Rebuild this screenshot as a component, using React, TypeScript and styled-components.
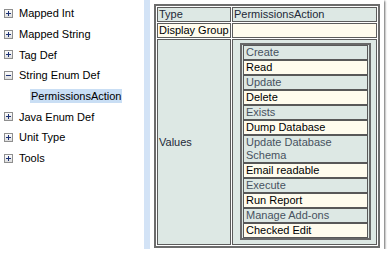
import React from "react";
import styled, { createGlobalStyle } from "styled-components";

const Global = createGlobalStyle`
  html, body { margin: 0; padding: 0; background: #ffffff; }
  body { font-family: "Liberation Sans", Arial, sans-serif; }
`;

const Frame = styled.div`
  display: flex;
  width: 384px;
  height: 249px;
  background: #ffffff;
  box-shadow: 1px 1px 2px rgba(0, 0, 0, 0.6);
  overflow: hidden;
`;

const Tree = styled.ul`
  list-style: none;
  margin: 0;
  padding: 3px 0 0 0;
  width: 144px;
  flex: none;
`;

const TreeRow = styled.li<{ $indent?: boolean }>`
  display: flex;
  align-items: center;
  height: 20.7px;
  padding-left: ${(p) => (p.$indent ? "30px" : "4px")};
  gap: 5px;
  font-size: 11px;
  color: #000000;
  white-space: nowrap;
`;

const Label = styled.span<{ $selected?: boolean }>`
  padding: 1px 1px;
  line-height: 12px;
  background: ${(p) => (p.$selected ? "#c9def4" : "transparent")};
`;

const Splitter = styled.div`
  width: 6px;
  flex: none;
  background: #d3e3f6;
`;

const Content = styled.div`
  flex: 1;
  padding: 4px 4px 0 4px;
`;

const OuterTable = styled.table`
  width: 226px;
  border-collapse: separate;
  border-spacing: 1px;
  border: 2px solid #6c6c6c;
  font-size: 11px;
  line-height: 13px;
`;

const Cell = styled.td<{ $cream?: boolean; $pad?: string }>`
  border: 1px solid #5c5c5c;
  padding: ${(p) => p.$pad ?? "0 1px"};
  background: ${(p) => (p.$cream ? "#fffcee" : "#dde8e4")};
  color: ${(p) => (p.$cream ? "#000000" : "#232838")};
  vertical-align: middle;
  white-space: nowrap;
`;

const KeyCell = styled(Cell)`
  width: 71px;
`;

const InnerTable = styled.table`
  margin: 3px 5px 4px 7px;
  width: 131px;
  border-collapse: separate;
  border-spacing: 1px 0;
  border: 2px solid #686868;
  padding: 0;
`;

const Item = styled.td<{ $cream?: boolean }>`
  border: 1px solid #585858;
  padding: 0 2px;
  line-height: 13px;
  background: ${(p) => (p.$cream ? "#fffcee" : "#dde8e4")};
  color: ${(p) => (p.$cream ? "#000000" : "#47525f")};
`;

function Icon({ open }: { open?: boolean }) {
  return (
    <svg width="9" height="9" viewBox="0 0 9 9" style={{ flex: "none" }}>
      <defs>
        <linearGradient id={open ? "gm" : "gp"} x1="0" y1="0" x2="0" y2="1">
          <stop offset="0" stopColor="#ffffff" />
          <stop offset="1" stopColor="#dcdcdc" />
        </linearGradient>
      </defs>
      <rect x="0.5" y="0.5" width="8" height="8" fill={`url(#${open ? "gm" : "gp"})`} stroke="#8e8e8e" />
      <rect x="2" y="4" width="5" height="1" fill="#1d3275" />
      {!open && <rect x="4" y="2" width="1" height="5" fill="#1d3275" />}
    </svg>
  );
}

const tree: { label: string; open?: boolean; leaf?: boolean; selected?: boolean }[] = [
  { label: "Mapped Int" },
  { label: "Mapped String" },
  { label: "Tag Def" },
  { label: "String Enum Def", open: true },
  { label: "PermissionsAction", leaf: true, selected: true },
  { label: "Java Enum Def" },
  { label: "Unit Type" },
  { label: "Tools" },
];

const values = [
  "Create",
  "Read",
  "Update",
  "Delete",
  "Exists",
  "Dump Database",
  "Update Database Schema",
  "Email readable",
  "Execute",
  "Run Report",
  "Manage Add-ons",
  "Checked Edit",
];

export default function App() {
  return (
    <>
      <Global />
      <Frame>
        <Tree>
          {tree.map((t) => (
            <TreeRow key={t.label} $indent={t.leaf}>
              {!t.leaf && <Icon open={t.open} />}
              <Label $selected={t.selected}>{t.label}</Label>
            </TreeRow>
          ))}
        </Tree>
        <Splitter />
        <Content>
          <OuterTable>
            <tbody>
              <tr>
                <KeyCell>Type</KeyCell>
                <Cell>PermissionsAction</Cell>
              </tr>
              <tr>
                <KeyCell $cream>Display Group</KeyCell>
                <Cell $cream>&nbsp;</Cell>
              </tr>
              <tr>
                <KeyCell>Values</KeyCell>
                <Cell $pad="0">
                  <InnerTable>
                    <tbody>
                      {values.map((v, i) => (
                        <tr key={v}>
                          <Item $cream={i % 2 === 1}>
                            {v === "Update Database Schema" ? (
                              <>
                                Update Database
                                <br />
                                Schema
                              </>
                            ) : (
                              v
                            )}
                          </Item>
                        </tr>
                      ))}
                    </tbody>
                  </InnerTable>
                </Cell>
              </tr>
            </tbody>
          </OuterTable>
        </Content>
      </Frame>
    </>
  );
}
